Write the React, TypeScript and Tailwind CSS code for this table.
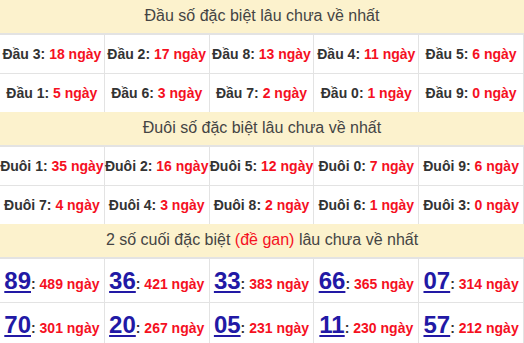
const dau = [
  [
    ["Đầu 3", 18],
    ["Đầu 2", 17],
    ["Đầu 8", 13],
    ["Đầu 4", 11],
    ["Đầu 5", 6],
  ],
  [
    ["Đầu 1", 5],
    ["Đầu 6", 3],
    ["Đầu 7", 2],
    ["Đầu 0", 1],
    ["Đầu 9", 0],
  ],
] as const;

const duoi = [
  [
    ["Đuôi 1", 35],
    ["Đuôi 2", 16],
    ["Đuôi 5", 12],
    ["Đuôi 0", 7],
    ["Đuôi 9", 6],
  ],
  [
    ["Đuôi 7", 4],
    ["Đuôi 4", 3],
    ["Đuôi 8", 2],
    ["Đuôi 6", 1],
    ["Đuôi 3", 0],
  ],
] as const;

const gan = [
  [
    ["89", 489],
    ["36", 421],
    ["33", 383],
    ["66", 365],
    ["07", 314],
  ],
  [
    ["70", 301],
    ["20", 267],
    ["05", 231],
    ["11", 230],
    ["57", 212],
  ],
] as const;

function Header({ children }: { children: React.ReactNode }) {
  return (
    <div className="flex h-[35px] items-center justify-center border-b-2 border-[#e3e3e3] bg-[#fcf2cd] pb-[2px] text-[16px] text-[#444]">
      {children}
    </div>
  );
}

function CountRows({ rows }: { rows: readonly (readonly (readonly [string, number])[])[] }) {
  return (
    <div>
      {rows.map((row, i) => (
        <div key={i} className={`grid grid-cols-5 ${i > 0 ? "border-t border-[#e3e3e3]" : ""}`}>
          {row.map(([label, days]) => (
            <div
              key={label}
              className="flex h-[38px] items-center justify-center whitespace-nowrap border-r border-[#e3e3e3] text-[14px] font-bold text-[#333]"
            >
              {label}:&nbsp;<span className="text-[#f5101f]">{days} ngày</span>
            </div>
          ))}
        </div>
      ))}
    </div>
  );
}

export default function App() {
  return (
    <div className="w-[524px] overflow-hidden bg-white font-['Liberation_Sans',Arial,sans-serif]">
      <Header>Đầu số đặc biệt lâu chưa về nhất</Header>
      <CountRows rows={dau} />

      <Header>Đuôi số đặc biệt lâu chưa về nhất</Header>
      <CountRows rows={duoi} />

      <Header>
        2 số cuối đặc biệt&nbsp;<span className="text-[#f5101f]">(đề gan)</span>&nbsp;lâu chưa về nhất
      </Header>
      <div>
        {gan.map((row, i) => (
          <div key={i} className={`grid grid-cols-5 ${i > 0 ? "border-t border-[#e3e3e3]" : ""}`}>
            {row.map(([num, days]) => (
              <div
                key={num}
                className="flex h-[43px] items-baseline justify-center whitespace-nowrap border-r border-[#e3e3e3] pt-[7px] font-bold text-[#333]"
              >
                <a href="#" className="text-[24px] leading-[30px] text-[#2219a5] underline decoration-[2px] underline-offset-[2px]">
                  {num}
                </a>
                <span className="text-[14px]">:&nbsp;</span>
                <span className="text-[14px] text-[#f5101f]">{days} ngày</span>
              </div>
            ))}
          </div>
        ))}
      </div>
    </div>
  );
}
